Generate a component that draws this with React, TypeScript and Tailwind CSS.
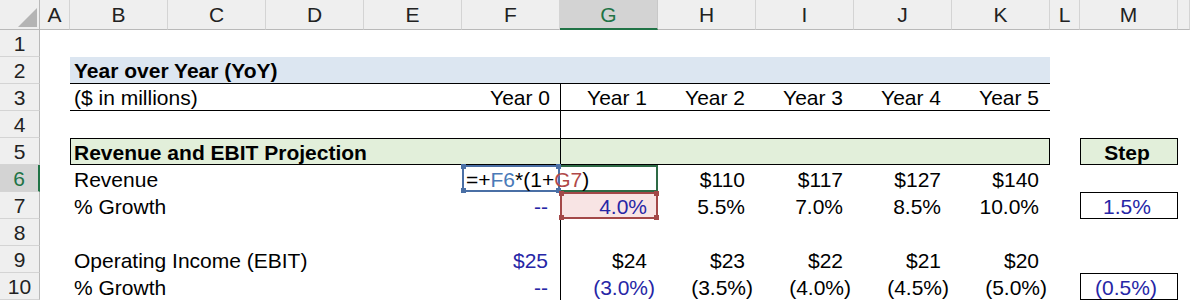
import React from "react";

const input = "text-[#2626a6]";

function ColHead({ label, active }: { label: string; active?: boolean }) {
  return (
    <div
      className={
        active
          ? "flex items-center justify-center bg-[#d3d3d3] border-r border-[#c8c8c8] border-b-2 border-b-[#217346] text-[#217346]"
          : "flex items-center justify-center bg-[#efefef] border-r border-[#d4d4d4] border-b border-b-[#b9b9b9] text-[#222]"
      }
    >
      {label}
    </div>
  );
}

function RowHead({ n, active }: { n: number; active?: boolean }) {
  return (
    <div
      className={
        active
          ? "flex items-center justify-center pt-[1px] bg-[#d3d3d3] border-b border-[#d4d4d4] border-r-2 border-r-[#217346] text-[#217346]"
          : "flex items-center justify-center pt-[1px] bg-[#efefef] border-b border-[#d4d4d4] border-r border-r-[#b9b9b9] text-[#222]"
      }
    >
      {n}
    </div>
  );
}

function Cell({ children, className = "" }: { children?: React.ReactNode; className?: string }) {
  return <div className={"flex items-center pt-[1px] whitespace-nowrap " + className}>{children}</div>;
}

function Handle({ pos, color }: { pos: string; color: string }) {
  return <span className={"absolute w-[5px] h-[5px] " + pos + " " + color} />;
}

export default function App() {
  const cols = ["A", "B", "C", "D", "E", "F", "G", "H", "I", "J", "K", "L", "M", ""];

  return (
    <div className="w-[1190px] h-[305px] overflow-hidden bg-white font-['Liberation_Sans',Arial,sans-serif] text-[21px] text-black leading-none">
      <div className="grid grid-cols-[40px_30px_repeat(10,98px)_30px_98px_12px] grid-rows-[30px_repeat(10,27px)]">
        {/* corner */}
        <div className="relative bg-[#efefef] border-r border-b border-[#b9b9b9]">
          <svg className="absolute left-[18px] top-[8px]" width="19" height="19" viewBox="0 0 19 19">
            <polygon points="19,0 19,19 0,19" fill="#b4b4b4" />
          </svg>
        </div>
        {cols.map((c) => (
          <ColHead key={c || "n"} label={c} active={c === "G"} />
        ))}

        {/* row 1 */}
        <RowHead n={1} />
        <div className="col-span-14" />

        {/* row 2 */}
        <RowHead n={2} />
        <Cell />
        <Cell className="col-span-10 bg-[#dce6f1] border-b border-black font-bold pl-[4px]">Year over Year (YoY)</Cell>
        <div className="col-span-3" />

        {/* row 3 */}
        <RowHead n={3} />
        <Cell />
        <Cell className="col-span-4 border-b border-black pl-[4px]">($ in millions)</Cell>
        <Cell className="border-b border-black justify-end pr-[10px]">Year 0</Cell>
        <Cell className="border-b border-l border-black justify-end pr-[11px]">Year 1</Cell>
        <Cell className="border-b border-black justify-end pr-[11px]">Year 2</Cell>
        <Cell className="border-b border-black justify-end pr-[11px]">Year 3</Cell>
        <Cell className="border-b border-black justify-end pr-[11px]">Year 4</Cell>
        <Cell className="border-b border-black justify-end pr-[11px]">Year 5</Cell>
        <div className="col-span-3" />

        {/* row 4 */}
        <RowHead n={4} />
        <div className="col-span-6" />
        <div className="border-l border-black" />
        <div className="col-span-7" />

        {/* row 5 */}
        <RowHead n={5} />
        <Cell />
        <Cell className="col-span-5 bg-[#e2efda] border-y border-l border-black font-bold pl-[3px]">
          Revenue and EBIT Projection
        </Cell>
        <Cell className="col-span-5 bg-[#e2efda] border border-black" />
        <Cell />
        <Cell className="bg-[#e2efda] border border-black font-bold justify-center pr-[4px]">Step</Cell>
        <Cell />

        {/* row 6 */}
        <RowHead n={6} active />
        <Cell />
        <Cell className="col-span-4 pl-[4px]">Revenue</Cell>
        <Cell className="relative z-10 border-2 border-[#4a6fa5]">
          <span className="inline-block w-[1.5px] h-[24px] bg-black mr-[2px]" />
          <span>=+</span>
          <span className="text-[#4a7ab8]">F6</span>
          <span>*(1+</span>
          <span className="text-[#b04848]">G7</span>
          <span>)</span>
          <Handle pos="-left-[3px] -top-[3px]" color="bg-[#4a6fa5]" />
          <Handle pos="-right-[3px] -top-[3px]" color="bg-[#4a6fa5]" />
          <Handle pos="-left-[3px] -bottom-[3px]" color="bg-[#4a6fa5]" />
          <Handle pos="-right-[3px] -bottom-[3px]" color="bg-[#4a6fa5]" />
        </Cell>
        <Cell className="border-y-2 border-r-2 border-[#2e6b46]" />
        <Cell className="justify-end pr-[11px]">$110</Cell>
        <Cell className="justify-end pr-[11px]">$117</Cell>
        <Cell className="justify-end pr-[11px]">$127</Cell>
        <Cell className="justify-end pr-[11px]">$140</Cell>
        <div className="col-span-3" />

        {/* row 7 */}
        <RowHead n={7} />
        <Cell />
        <Cell className="col-span-4 pl-[4px]">% Growth</Cell>
        <Cell className={"justify-end pr-[12px] " + input}>--</Cell>
        <Cell className={"relative z-20 bg-[#f8e4e4] border-2 border-[#a34848] justify-end pr-[9px] " + input}>
          4.0%
          <Handle pos="-left-[3px] -top-[3px]" color="bg-[#a34848]" />
          <Handle pos="-right-[3px] -top-[3px]" color="bg-[#a34848]" />
          <Handle pos="-left-[3px] -bottom-[3px]" color="bg-[#a34848]" />
          <Handle pos="-right-[3px] -bottom-[3px]" color="bg-[#a34848]" />
        </Cell>
        <Cell className="justify-end pr-[11px]">5.5%</Cell>
        <Cell className="justify-end pr-[11px]">7.0%</Cell>
        <Cell className="justify-end pr-[11px]">8.5%</Cell>
        <Cell className="justify-end pr-[11px]">10.0%</Cell>
        <Cell />
        <Cell className={"border border-black justify-center pr-[4px] " + input}>1.5%</Cell>
        <Cell />

        {/* row 8 */}
        <RowHead n={8} />
        <div className="col-span-6" />
        <div className="border-l border-black" />
        <div className="col-span-7" />

        {/* row 9 */}
        <RowHead n={9} />
        <Cell />
        <Cell className="col-span-4 pl-[4px]">Operating Income (EBIT)</Cell>
        <Cell className={"justify-end pr-[12px] " + input}>$25</Cell>
        <Cell className="border-l border-black justify-end pr-[11px]">$24</Cell>
        <Cell className="justify-end pr-[11px]">$23</Cell>
        <Cell className="justify-end pr-[11px]">$22</Cell>
        <Cell className="justify-end pr-[11px]">$21</Cell>
        <Cell className="justify-end pr-[11px]">$20</Cell>
        <div className="col-span-3" />

        {/* row 10 */}
        <RowHead n={10} />
        <Cell />
        <Cell className="col-span-4 pl-[4px]">% Growth</Cell>
        <Cell className={"justify-end pr-[12px] " + input}>--</Cell>
        <Cell className={"border-l border-black justify-end pr-[3px] " + input}>(3.0%)</Cell>
        <Cell className="justify-end pr-[3px]">(3.5%)</Cell>
        <Cell className="justify-end pr-[3px]">(4.0%)</Cell>
        <Cell className="justify-end pr-[3px]">(4.5%)</Cell>
        <Cell className="justify-end pr-[3px]">(5.0%)</Cell>
        <Cell />
        <Cell className={"border border-black justify-center pr-[6px] " + input}>(0.5%)</Cell>
        <Cell />
      </div>
    </div>
  );
}
